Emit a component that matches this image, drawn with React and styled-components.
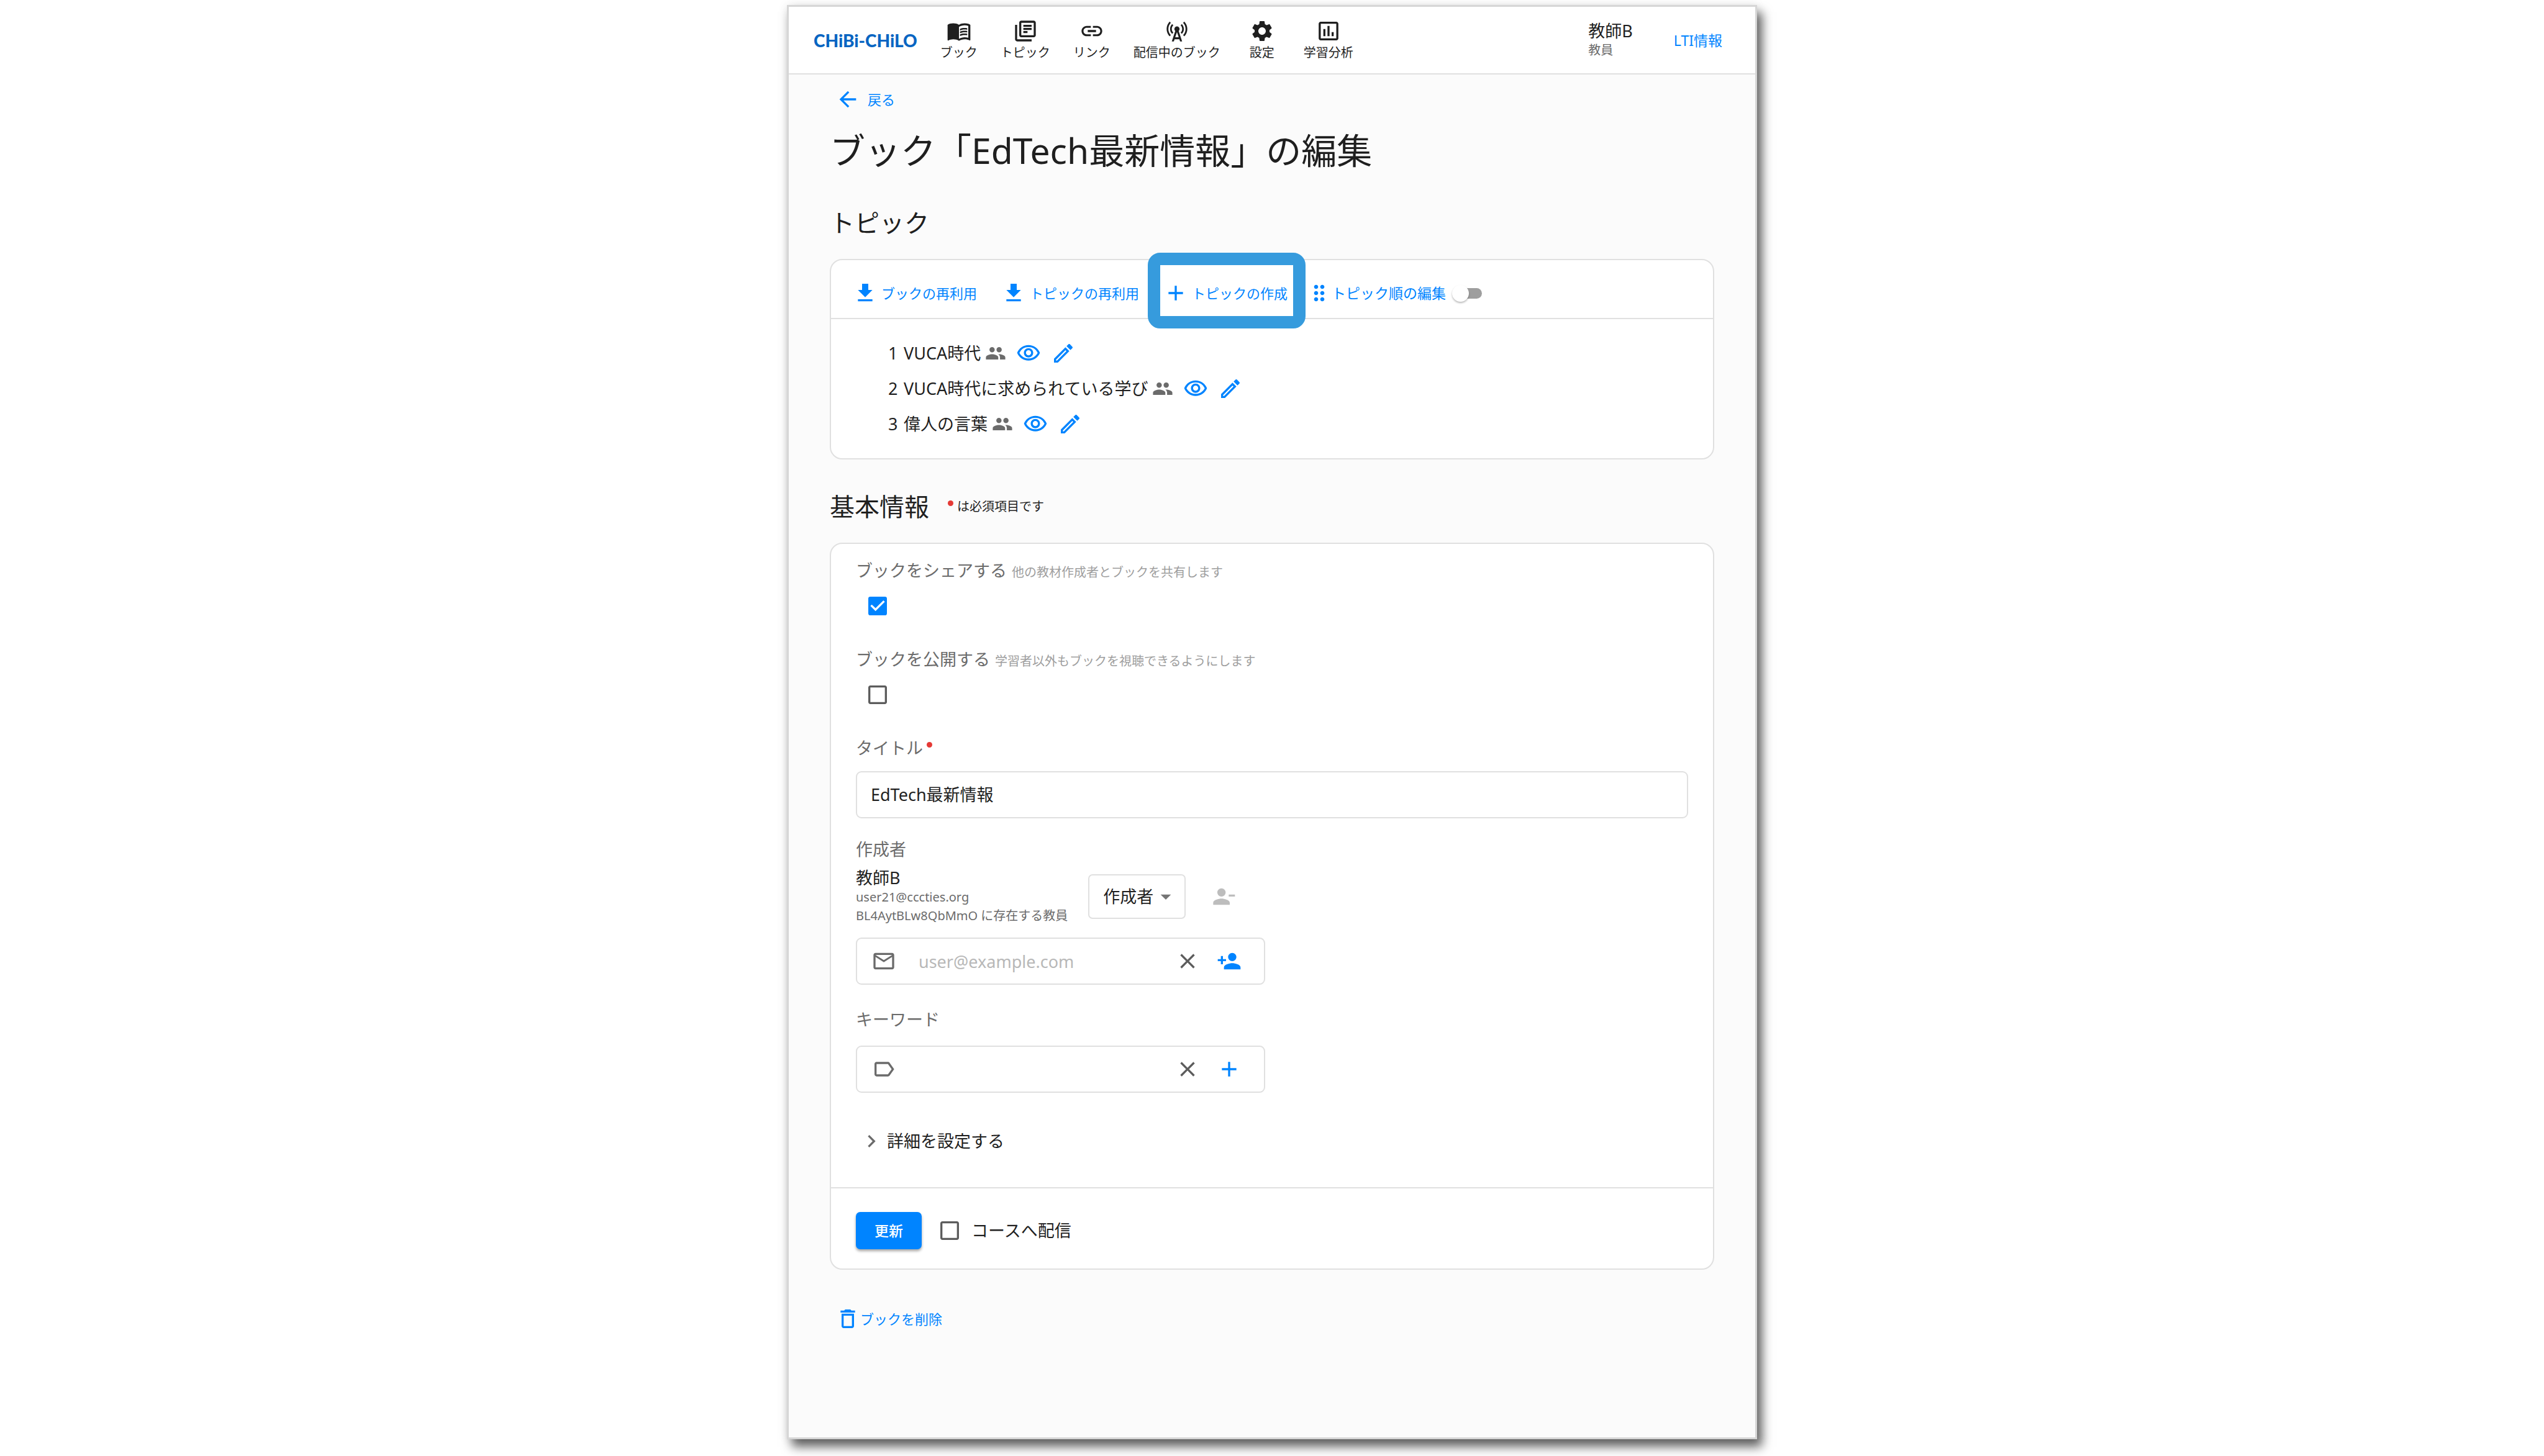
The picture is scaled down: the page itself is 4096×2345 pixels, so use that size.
import React, { useId, useState } from "react";
import styled, { createGlobalStyle, css } from "styled-components";
import {
  MdAdd,
  MdArrowBack,
  MdArrowDropDown,
  MdCellTower,
  MdCheckBox,
  MdCheckBoxOutlineBlank,
  MdChevronRight,
  MdClose,
  MdDeleteOutline,
  MdDragIndicator,
  MdGetApp,
  MdInsertChartOutlined,
  MdLabelOutline,
  MdLink,
  MdMailOutline,
  MdMenuBook,
  MdOutlineEdit,
  MdOutlineLibraryBooks,
  MdOutlineVisibility,
  MdPeople,
  MdPersonAdd,
  MdPersonRemove,
  MdSettings,
} from "react-icons/md";

const color = {
  text: "#1f1f1f",
  sub: "#6b6b6b",
  hint: "#9e9e9e",
  line: "#e0e0e0",
  primary: "#0084ff",
  danger: "#e53935",
};

const GlobalStyle = createGlobalStyle`
  *, *::before, *::after { box-sizing: border-box; }
  body {
    margin: 0;
    background: #fff;
    color: ${color.text};
    font-family: "Noto Sans", "Noto Sans CJK JP", sans-serif;
    font-size: 27px;
    line-height: 40px;
  }
  button, input, select { font: inherit; color: inherit; }
  svg { display: block; flex: none; }
`;

const Page = styled.div`
  padding: 8px 24px 27px;
`;

const Frame = styled.div`
  max-width: 1562px;
  min-height: calc(100vh - 35px);
  margin: 0 auto;
  border: 3px solid #d6d6d6;
  background: #fbfbfb;
  box-shadow: 8px 12px 16px rgba(0, 0, 0, 0.62), 0 0 16px rgba(0, 0, 0, 0.08);
`;

const Header = styled.header`
  display: flex;
  align-items: center;
  min-height: 109px;
  padding: 0 40px;
  border-bottom: 2px solid ${color.line};
  background: #fff;
`;

const Logo = styled.a`
  margin-right: 37px;
  color: #0765c2;
  font-family: Lato, sans-serif;
  font-size: 28px;
  font-weight: 900;
  text-decoration: none;
`;

const Nav = styled.nav`
  display: flex;
  gap: 37px;
`;

const NavLink = styled.a`
  display: flex;
  flex-direction: column;
  align-items: center;
  min-width: 60px;
  color: inherit;
  font-size: 20px;
  line-height: 30px;
  text-decoration: none;
  white-space: nowrap;
`;

const Account = styled.div`
  display: flex;
  align-items: center;
  gap: 66px;
  margin-left: auto;
  padding-right: 13px;
`;

const Person = styled.div`
  display: flex;
  flex-direction: column;
  font-size: 27px;
  line-height: 32px;
`;

const PersonNote = styled.span`
  color: ${color.sub};
  font-size: 20px;
  line-height: 30px;
`;

const plainButton = css`
  padding: 0;
  border: 0;
  background: none;
  cursor: pointer;
`;

const LtiButton = styled.button`
  ${plainButton}
  color: ${color.primary};
  font-size: 23px;
`;

const Main = styled.main`
  display: flex;
  flex-direction: column;
  align-items: stretch;
  padding: 20px 66px 0;
`;

const ActionLink = styled.a`
  display: flex;
  align-self: flex-start;
  align-items: center;
  gap: ${(p) => p.$gap || "0"};
  margin-left: 9px;
  color: ${color.primary};
  font-size: 22px;
  text-decoration: none;
`;

const Title = styled.h1`
  margin: 20px 0 45px;
  font-size: 57px;
  font-weight: 400;
  line-height: 84px;
`;

const SectionHead = styled.div`
  display: flex;
  align-items: center;
  gap: 30px;
  margin-bottom: 28px;
`;

const SectionTitle = styled.h2`
  margin: 0;
  font-size: 40px;
  font-weight: 400;
  line-height: 60px;
`;

const RequiredNote = styled.span`
  display: flex;
  gap: 6px;
  font-size: 20px;
`;

const RequiredDot = styled.span`
  width: 9px;
  height: 9px;
  margin-top: 10px;
  border-radius: 50%;
  background: ${color.danger};
`;

const Card = styled.section`
  margin-bottom: ${(p) => p.$after};
  border: 2px solid ${color.line};
  border-radius: 20px;
  background: #fff;
`;

const Toolbar = styled.div`
  display: flex;
  align-items: center;
  gap: 39px;
  padding: 33px 35px 20px;
  border-bottom: 2px solid ${color.line};
`;

const ToolButton = styled.button`
  ${plainButton}
  position: relative;
  display: flex;
  align-items: center;
  gap: 6px;
  color: ${color.primary};
  font-size: 22px;
  line-height: 40px;
  white-space: nowrap;
`;

const Highlight = styled.span`
  position: absolute;
  inset: -45px -29px -37px -25px;
  border: 20px solid #369bdd;
  border-radius: 20px;
  pointer-events: none;
`;

const SortSwitch = styled.label`
  display: flex;
  align-items: center;
  margin-left: -8px;
  color: ${color.primary};
  font-size: 23px;
  white-space: nowrap;
`;

const SwitchInput = styled.input`
  appearance: none;
  display: flex;
  align-items: center;
  width: 43px;
  height: 17px;
  margin: 0 0 0 15px;
  border-radius: 9px;
  background: #9e9e9e;

  &::before {
    content: "";
    width: 27px;
    height: 27px;
    flex: none;
    margin-left: -5px;
    border-radius: 50%;
    background: #fff;
    box-shadow: 0 2px 3px rgba(0, 0, 0, 0.28);
  }
  &:checked { background: ${color.primary}; }
  &:checked::before { margin-left: 21px; }
`;

const TopicList = styled.ol`
  margin: 0;
  padding: 26px 0 27px 92px;
  list-style: none;
`;

const TopicRow = styled.li`
  display: flex;
  align-items: center;
  gap: 16px;
  min-height: 57px;
`;

const TopicName = styled.span`
  display: flex;
  align-items: center;
  gap: 7px;

  svg { color: ${color.sub}; }
`;

const TopicNumber = styled.span`
  min-width: 18px;
`;

const IconButton = styled.button`
  ${plainButton}
  color: ${(p) => p.$tone || color.primary};
`;

const FormBody = styled.div`
  padding: 23px 40px 54px;
`;

const Field = styled.div`
  display: flex;
  flex-direction: column;
  align-items: flex-start;
  gap: ${(p) => p.$gap || "17px"};
  margin-bottom: ${(p) => p.$after || "0"};
`;

const Label = styled.label`
  display: flex;
  align-items: baseline;
  gap: 8px;
  color: ${color.sub};
`;

const Required = styled.span`
  display: flex;
  gap: 6px;
`;

const Hint = styled.span`
  color: ${color.hint};
  font-size: 20px;
`;

const CheckShell = styled.span`
  display: grid;
  width: 40px;
  height: 40px;
  color: ${(p) => (p.$checked ? color.primary : "#5c5c5c")};

  > * { grid-area: 1 / 1; }
`;

const CheckInput = styled.input`
  appearance: none;
  width: 40px;
  height: 40px;
  margin: 0;
  cursor: pointer;
`;

const CheckRow = styled.div`
  padding-left: 15px;
`;

const TextInput = styled.input`
  width: 100%;
  height: 76px;
  padding: 0 22px 3px;
  border: 2px solid ${color.line};
  border-radius: 9px;
  background: #fff;
`;

const AuthorRow = styled.div`
  display: flex;
  align-items: center;
  gap: 33px;
`;

const RoleSelect = styled.span`
  display: grid;
  align-items: center;
  justify-items: end;
  width: 157px;
  color: ${color.text};

  > * { grid-area: 1 / 1; }
  svg {
    margin-right: 12px;
    color: #757575;
    pointer-events: none;
  }
`;

const SelectInput = styled.select`
  appearance: none;
  width: 100%;
  height: 72px;
  padding: 0 22px;
  border: 2px solid ${color.line};
  border-radius: 7px;
  background: #fff;
`;

const RemoveSlot = styled.span`
  display: flex;
  align-items: center;
  height: 72px;
  margin-left: 8px;
`;

const InputGroup = styled.div`
  display: flex;
  align-items: center;
  width: 100%;
  max-width: 659px;
  height: 76px;
  padding: 0 36px 0 23px;
  border: 2px solid ${color.line};
  border-radius: 9px;
  background: #fff;

  > svg { color: ${color.sub}; }
`;

const GroupInput = styled.input`
  flex: 1;
  min-width: 0;
  height: 100%;
  padding: 0 36px;
  border: 0;
  outline: 0;
  background: none;

  &::placeholder { color: #b8b8b8; opacity: 1; }
`;

const GroupActions = styled.span`
  display: flex;
  gap: 27px;
`;

const DetailButton = styled.button`
  ${plainButton}
  display: flex;
  align-items: center;
  gap: 5px;
  padding-left: 5px;

  svg { color: ${color.sub}; }
`;

const CardFooter = styled.div`
  display: flex;
  align-items: center;
  gap: 25px;
  padding: 38px 40px 31px;
  border-top: 2px solid ${color.line};
`;

const SubmitButton = styled.button`
  height: 60px;
  padding: 0 30px;
  border: 0;
  border-radius: 7px;
  background: ${color.primary};
  box-shadow: 0 3px 4px rgba(0, 0, 0, 0.35);
  color: #fff;
  font-size: 23px;
  font-weight: 500;
  cursor: pointer;
`;

const DeliverLabel = styled.label`
  display: flex;
  align-items: center;
  gap: 15px;
`;

const navItems = [
  { label: "ブック", Icon: MdMenuBook },
  { label: "トピック", Icon: MdOutlineLibraryBooks },
  { label: "リンク", Icon: MdLink },
  { label: "配信中のブック", Icon: MdCellTower },
  { label: "設定", Icon: MdSettings },
  { label: "学習分析", Icon: MdInsertChartOutlined },
];

const topics = ["VUCA時代", "VUCA時代に求められている学び", "偉人の言葉"];

function Checkbox({ id, defaultChecked = false }) {
  const [checked, setChecked] = useState(defaultChecked);
  const Icon = checked ? MdCheckBox : MdCheckBoxOutlineBlank;
  return (
    <CheckShell $checked={checked}>
      <Icon size={40} aria-hidden="true" />
      <CheckInput
        id={id}
        type="checkbox"
        checked={checked}
        onChange={(e) => setChecked(e.target.checked)}
      />
    </CheckShell>
  );
}

function CheckField({ label, hint, defaultChecked }) {
  const id = useId();
  return (
    <Field $gap="14px" $after="46px">
      <Label htmlFor={id}>
        {label}
        <Hint>{hint}</Hint>
      </Label>
      <CheckRow>
        <Checkbox id={id} defaultChecked={defaultChecked} />
      </CheckRow>
    </Field>
  );
}

function Topic({ number, name }) {
  return (
    <TopicRow>
      <TopicName>
        <TopicNumber>{number}</TopicNumber>
        {name}
        <MdPeople size={34} aria-hidden="true" />
      </TopicName>
      <IconButton type="button" aria-label="プレビュー">
        <MdOutlineVisibility size={40} />
      </IconButton>
      <IconButton type="button" aria-label="編集">
        <MdOutlineEdit size={40} />
      </IconButton>
    </TopicRow>
  );
}

export default function App() {
  return (
    <>
      <GlobalStyle />
      <Page>
        <Frame>
          <Header>
            <Logo href="#">CHiBi-CHiLO</Logo>
            <Nav>
              {navItems.map(({ label, Icon }) => (
                <NavLink key={label} href="#">
                  <Icon size={40} aria-hidden="true" />
                  {label}
                </NavLink>
              ))}
            </Nav>
            <Account>
              <Person>
                教師B
                <PersonNote>教員</PersonNote>
              </Person>
              <LtiButton type="button">LTI情報</LtiButton>
            </Account>
          </Header>

          <Main>
            <ActionLink href="#" $gap="12px">
              <MdArrowBack size={40} aria-hidden="true" />
              戻る
            </ActionLink>
            <Title>ブック「EdTech最新情報」の編集</Title>

            <SectionHead>
              <SectionTitle>トピック</SectionTitle>
            </SectionHead>
            <Card $after="46px">
              <Toolbar>
                <ToolButton type="button">
                  <MdGetApp size={40} aria-hidden="true" />
                  ブックの再利用
                </ToolButton>
                <ToolButton type="button">
                  <MdGetApp size={40} aria-hidden="true" />
                  トピックの再利用
                </ToolButton>
                <ToolButton type="button">
                  <MdAdd size={40} aria-hidden="true" />
                  トピックの作成
                  <Highlight />
                </ToolButton>
                <SortSwitch>
                  <MdDragIndicator size={40} aria-hidden="true" />
                  トピック順の編集
                  <SwitchInput type="checkbox" role="switch" />
                </SortSwitch>
              </Toolbar>
              <TopicList>
                {topics.map((name, i) => (
                  <Topic key={name} number={i + 1} name={name} />
                ))}
              </TopicList>
            </Card>

            <SectionHead>
              <SectionTitle>基本情報</SectionTitle>
              <RequiredNote>
                <RequiredDot />
                は必須項目です
              </RequiredNote>
            </SectionHead>
            <Card as="form" $after="59px">
              <FormBody>
                <CheckField
                  label="ブックをシェアする"
                  hint="他の教材作成者とブックを共有します"
                  defaultChecked
                />
                <CheckField
                  label="ブックを公開する"
                  hint="学習者以外もブックを視聴できるようにします"
                />
                <Field $after="30px">
                  <Label htmlFor="title">
                    <Required>
                      タイトル
                      <RequiredDot />
                    </Required>
                  </Label>
                  <TextInput id="title" type="text" defaultValue="EdTech最新情報" />
                </Field>
                <Field $gap="10px" $after="20px">
                  <Label htmlFor="role">作成者</Label>
                  <AuthorRow>
                    <Person>
                      教師B
                      <PersonNote>user21@cccties.org</PersonNote>
                      <PersonNote>BL4AytBLw8QbMmO に存在する教員</PersonNote>
                    </Person>
                    <RoleSelect>
                      <SelectInput id="role" defaultValue="author">
                        <option value="author">作成者</option>
                        <option value="coauthor">共著者</option>
                      </SelectInput>
                      <MdArrowDropDown size={40} aria-hidden="true" />
                    </RoleSelect>
                    <RemoveSlot>
                      <IconButton type="button" $tone="#bdbdbd" disabled aria-label="作成者を除外">
                        <MdPersonRemove size={40} />
                      </IconButton>
                    </RemoveSlot>
                  </AuthorRow>
                </Field>
                <Field $after="36px">
                  <InputGroup>
                    <MdMailOutline size={40} aria-hidden="true" />
                    <GroupInput
                      type="email"
                      placeholder="user@example.com"
                      aria-label="メールアドレス"
                    />
                    <GroupActions>
                      <IconButton type="button" $tone="#5c5c5c" aria-label="クリア">
                        <MdClose size={40} />
                      </IconButton>
                      <IconButton type="button" aria-label="作成者を追加">
                        <MdPersonAdd size={40} />
                      </IconButton>
                    </GroupActions>
                  </InputGroup>
                </Field>
                <Field $gap="22px" $after="58px">
                  <Label htmlFor="keyword">キーワード</Label>
                  <InputGroup>
                    <MdLabelOutline size={40} aria-hidden="true" />
                    <GroupInput id="keyword" type="text" />
                    <GroupActions>
                      <IconButton type="button" $tone="#5c5c5c" aria-label="クリア">
                        <MdClose size={40} />
                      </IconButton>
                      <IconButton type="button" aria-label="キーワードを追加">
                        <MdAdd size={40} />
                      </IconButton>
                    </GroupActions>
                  </InputGroup>
                </Field>
                <DetailButton type="button">
                  <MdChevronRight size={40} aria-hidden="true" />
                  詳細を設定する
                </DetailButton>
              </FormBody>
              <CardFooter>
                <SubmitButton type="button">更新</SubmitButton>
                <DeliverLabel htmlFor="deliver">
                  <Checkbox id="deliver" />
                  コースへ配信
                </DeliverLabel>
              </CardFooter>
            </Card>

            <ActionLink href="#">
              <MdDeleteOutline size={40} aria-hidden="true" />
              ブックを削除
            </ActionLink>
          </Main>
        </Frame>
      </Page>
    </>
  );
}
